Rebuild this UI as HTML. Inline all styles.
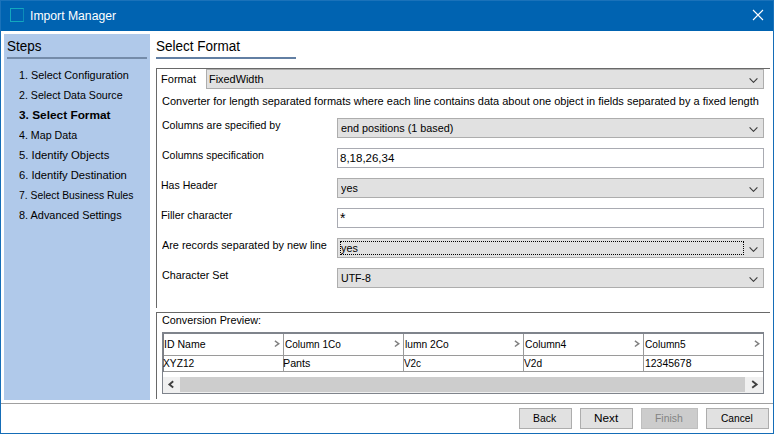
<!DOCTYPE html>
<html>
<head>
<meta charset="utf-8">
<title>Import Manager</title>
<style>
html,body{margin:0;padding:0;background:#fff;}
body{width:774px;height:434px;overflow:hidden;position:relative;font-family:"Liberation Sans",sans-serif;font-size:11.5px;color:#000;}
.abs{position:absolute;}
.t,.step,.h,.combo span,.field span,.btn span,#title{transform-origin:0 0;}
#win{position:absolute;left:0;top:0;width:772px;height:432px;border:1px solid #156DB7;background:#fff;}
#titlebar{position:absolute;left:0;top:0;width:772px;height:30px;background:#0063B1;border:1px solid #1A72BA;border-bottom:0;}
#ticon{position:absolute;left:9px;top:7px;width:12px;height:12px;border:1px solid #12A8BE;border-right-color:#0D8CB9;}
#title{position:absolute;left:29px;top:8px;font-size:12px;line-height:15px;color:#fff;white-space:nowrap;}
#close{position:absolute;left:751px;top:8px;width:12px;height:12px;}
#side{position:absolute;left:4px;top:34px;width:146px;height:366px;background:#B0C9EA;}
.h{position:absolute;font-size:14px;line-height:16px;white-space:nowrap;}
.ul{position:absolute;height:2px;background:#748BA9;}
.step{position:absolute;left:19px;white-space:nowrap;line-height:13px;}
.t{position:absolute;white-space:nowrap;line-height:13px;}
.panel{position:absolute;border-top:1px solid #696969;border-left:1px solid #696969;}
.combo{position:absolute;box-sizing:border-box;height:20px;background:#E1E1E1;border:1px solid #ADADAD;}
.combo span{position:absolute;left:3px;top:3px;line-height:13px;white-space:nowrap;}
.combo svg{position:absolute;right:5px;top:8px;}
.field{position:absolute;box-sizing:border-box;height:20px;background:#fff;border:1px solid #A9ABB2;}
.field span{position:absolute;left:2px;top:3px;line-height:13px;white-space:nowrap;}
.btn{position:absolute;top:408px;height:21px;box-sizing:border-box;background:#E1E1E1;border:1px solid #ADADAD;}
.btn span{position:absolute;top:3px;line-height:13px;white-space:nowrap;}
.btn.dis{background:#CCCCCC;border-color:#BFBFBF;color:#838383;}
.gl{position:absolute;background:#9A9A9A;}
.hm{color:#8A8A8A;}
#title{margin-left:0.00px;transform:scaleX(1.0159);}
#steps_h{margin-left:0.00px;transform:scaleX(0.9613);}
#s1{margin-left:0.00px;transform:scaleX(0.9443);}
#s2{margin-left:0.00px;transform:scaleX(0.9257);}
#s3{margin-left:0.00px;transform:scaleX(1.0306);}
#s4{margin-left:0.00px;transform:scaleX(0.9285);}
#s5{margin-left:0.00px;transform:scaleX(0.9815);}
#s6{margin-left:0.00px;transform:scaleX(0.9753);}
#s7{margin-left:0.00px;transform:scaleX(0.9001);}
#s8{margin-left:0.00px;transform:scaleX(0.9501);}
#main_h{margin-left:0.00px;transform:scaleX(0.9652);}
#l_format{margin-left:0.00px;transform:scaleX(0.9622);}
#c_format{margin-left:0.00px;transform:scaleX(0.9471);}
#l_desc{margin-left:0.00px;transform:scaleX(0.9556);}
#l_cols{margin-left:0.00px;transform:scaleX(0.9179);}
#l_spec{margin-left:0.00px;transform:scaleX(0.9104);}
#l_hdr{margin-left:0.00px;transform:scaleX(0.9147);}
#l_fill{margin-left:0.00px;transform:scaleX(0.9367);}
#l_rec{margin-left:0.00px;transform:scaleX(0.9445);}
#l_cs{margin-left:0.00px;transform:scaleX(0.9353);}
#l_prev{margin-left:0.00px;transform:scaleX(0.9391);}
#c_end{margin-left:0.00px;transform:scaleX(0.9390);}
#f_spec{margin-left:0.00px;transform:scaleX(0.9998);}
#c_yes1{margin-left:0.00px;transform:scaleX(0.9367);}
#c_yes2{margin-left:0.00px;transform:scaleX(0.9367);}
#c_utf{margin-left:0.00px;transform:scaleX(0.9204);}
#th1{margin-left:0.00px;transform:scaleX(0.9162);}
#th2{margin-left:0.00px;transform:scaleX(0.8744);}
#th3{margin-left:0.00px;transform:scaleX(0.8891);}
#th4{margin-left:0.00px;transform:scaleX(0.8985);}
#th5{margin-left:0.00px;transform:scaleX(0.8835);}
#td1{margin-left:0.00px;transform:scaleX(0.8894);}
#td2{margin-left:0.00px;transform:scaleX(0.9320);}
#td3{margin-left:0.00px;transform:scaleX(0.8604);}
#td4{margin-left:0.00px;transform:scaleX(0.8820);}
#td5{margin-left:0.00px;transform:scaleX(0.9081);}
#b_back{margin-left:0.00px;transform:scaleX(0.9041);}
#b_next{margin-left:0.00px;transform:scaleX(1.0216);}
#b_finish{margin-left:0.00px;transform:scaleX(0.9070);}
#b_cancel{margin-left:0.00px;transform:scaleX(0.8877);}
</style>
</head>
<body>
<div id="win"></div>
<div id="titlebar">
  <div id="ticon"></div>
  <div id="title">Import Manager</div>
  <svg id="close" viewBox="0 0 12 12"><path d="M1 1 L11 11 M11 1 L1 11" stroke="#fff" stroke-width="1.1" fill="none"/></svg>
</div>

<div id="side"></div>
<div class="h" id="steps_h" style="left:7px;top:38px;">Steps</div>
<div class="ul" style="left:7px;top:57px;width:140px;"></div>
<div class="step" id="s1" style="top:69px;">1. Select Configuration</div>
<div class="step" id="s2" style="top:89px;">2. Select Data Source</div>
<div class="step" id="s3" style="top:109px;font-weight:bold;">3. Select Format</div>
<div class="step" id="s4" style="top:129px;">4. Map Data</div>
<div class="step" id="s5" style="top:149px;">5. Identify Objects</div>
<div class="step" id="s6" style="top:169px;">6. Identify Destination</div>
<div class="step" id="s7" style="top:189px;">7. Select Business Rules</div>
<div class="step" id="s8" style="top:209px;">8. Advanced Settings</div>

<div class="h" id="main_h" style="left:156px;top:38px;">Select Format</div>
<div class="ul" style="left:156px;top:57px;width:140px;background:#627FA3;"></div>

<div class="panel" style="left:156px;top:68px;width:613px;height:239px;"></div>
<div class="t" id="l_format" style="left:161px;top:73px;">Format</div>
<div class="combo" style="left:206px;top:69px;width:558px;"><span id="c_format" style="left:2px;">FixedWidth</span><svg width="9" height="5" viewBox="0 0 9 5"><path d="M0.6 0.4 L4.5 4.3 L8.4 0.4" stroke="#3A3A3A" stroke-width="1.15" fill="none"/></svg></div>
<div class="t" id="l_desc" style="left:162px;top:95px;">Converter for length separated formats where each line contains data about one object in fields separated by a fixed length</div>

<div class="t" id="l_cols" style="left:162px;top:119px;">Columns are specified by</div>
<div class="combo" style="left:337px;top:118px;width:427px;"><span id="c_end">end positions (1 based)</span><svg width="9" height="5" viewBox="0 0 9 5"><path d="M0.6 0.4 L4.5 4.3 L8.4 0.4" stroke="#3A3A3A" stroke-width="1.15" fill="none"/></svg></div>

<div class="t" id="l_spec" style="left:162px;top:149px;">Columns specification</div>
<div class="field" style="left:337px;top:148px;width:427px;"><span id="f_spec">8,18,26,34</span></div>

<div class="t" id="l_hdr" style="left:161px;top:179px;">Has Header</div>
<div class="combo" style="left:337px;top:178px;width:427px;"><span id="c_yes1">yes</span><svg width="9" height="5" viewBox="0 0 9 5"><path d="M0.6 0.4 L4.5 4.3 L8.4 0.4" stroke="#3A3A3A" stroke-width="1.15" fill="none"/></svg></div>

<div class="t" id="l_fill" style="left:161px;top:209px;">Filler character</div>
<div class="field" style="left:337px;top:208px;width:427px;"><span id="f_star" style="font-size:14px;left:2px;top:3px;">*</span></div>

<div class="t" id="l_rec" style="left:162px;top:239px;">Are records separated by new line</div>
<div class="combo" style="left:337px;top:238px;width:427px;"><span id="c_yes2">yes</span><div class="abs" style="left:2px;top:2px;width:402px;height:12px;border:1px dotted #000;"></div><svg width="9" height="5" viewBox="0 0 9 5"><path d="M0.6 0.4 L4.5 4.3 L8.4 0.4" stroke="#3A3A3A" stroke-width="1.15" fill="none"/></svg></div>

<div class="t" id="l_cs" style="left:162px;top:269px;">Character Set</div>
<div class="combo" style="left:337px;top:268px;width:427px;"><span id="c_utf">UTF-8</span><svg width="9" height="5" viewBox="0 0 9 5"><path d="M0.6 0.4 L4.5 4.3 L8.4 0.4" stroke="#3A3A3A" stroke-width="1.15" fill="none"/></svg></div>

<div class="panel" style="left:156px;top:312px;width:613px;height:86px;"></div>
<div class="t" id="l_prev" style="left:162px;top:314px;">Conversion Preview:</div>

<div id="tbl" class="abs" style="left:162px;top:332px;width:602px;height:62px;box-sizing:border-box;border:1px solid #7F848C;border-top-width:2px;"></div>
<div class="abs" style="left:163px;top:334px;width:1px;height:38px;background:#7B7E84;"></div>
<div class="gl" style="left:164px;top:355px;width:599px;height:1px;"></div>
<div class="gl" style="left:164px;top:371px;width:599px;height:1px;"></div>
<div class="gl" style="left:283px;top:334px;width:1px;height:37px;"></div>
<div class="gl" style="left:403px;top:334px;width:1px;height:37px;"></div>
<div class="gl" style="left:523px;top:334px;width:1px;height:37px;"></div>
<div class="gl" style="left:643px;top:334px;width:1px;height:37px;"></div>

<div class="t" id="th1" style="left:164px;top:338px;">ID Name</div>
<div class="t" id="th2" style="left:285px;top:338px;">Column 1Co</div>
<div class="t" id="th3" style="left:405px;top:338px;">lumn 2Co</div>
<div class="t" id="th4" style="left:525px;top:338px;">Column4</div>
<div class="t" id="th5" style="left:645px;top:338px;">Column5</div>
<div class="t" id="td1" style="left:163px;top:357px;">XYZ12</div>
<div class="t" id="td2" style="left:283px;top:357px;">Pants</div>
<div class="t" id="td3" style="left:404px;top:357px;">V2c</div>
<div class="t" id="td4" style="left:524px;top:357px;">V2d</div>
<div class="t" id="td5" style="left:645px;top:357px;">12345678</div>

<svg class="abs" style="left:273.5px;top:340px;" width="6" height="8" viewBox="0 0 6 8"><path d="M0.9 0.9 L4.8 3.7 L0.9 6.5" stroke="#808080" stroke-width="1.5" fill="none"/></svg>
<svg class="abs" style="left:393.5px;top:340px;" width="6" height="8" viewBox="0 0 6 8"><path d="M0.9 0.9 L4.8 3.7 L0.9 6.5" stroke="#808080" stroke-width="1.5" fill="none"/></svg>
<svg class="abs" style="left:513.5px;top:340px;" width="6" height="8" viewBox="0 0 6 8"><path d="M0.9 0.9 L4.8 3.7 L0.9 6.5" stroke="#808080" stroke-width="1.5" fill="none"/></svg>
<svg class="abs" style="left:633.5px;top:340px;" width="6" height="8" viewBox="0 0 6 8"><path d="M0.9 0.9 L4.8 3.7 L0.9 6.5" stroke="#808080" stroke-width="1.5" fill="none"/></svg>
<svg class="abs" style="left:753.5px;top:340px;" width="6" height="8" viewBox="0 0 6 8"><path d="M0.9 0.9 L4.8 3.7 L0.9 6.5" stroke="#808080" stroke-width="1.5" fill="none"/></svg>

<div class="abs" style="left:163px;top:377px;width:600px;height:16px;background:#F0F0F0;"></div>
<div class="abs" style="left:180px;top:377px;width:565px;height:15px;background:#CDCDCD;"></div>
<svg class="abs" style="left:167px;top:380px;" width="8" height="9" viewBox="0 0 8 9"><path d="M6.2 1.3 L2.4 4.4 L6.2 7.5" stroke="#404040" stroke-width="1.9" fill="none"/></svg>
<svg class="abs" style="left:751px;top:380px;" width="8" height="9" viewBox="0 0 8 9"><path d="M1.2 1.1 L5.6 4.4 L1.2 7.7" stroke="#404040" stroke-width="1.9" fill="none"/></svg>

<div class="abs" style="left:1px;top:403px;width:772px;height:1px;background:#A0A0A0;"></div>
<div class="btn" style="left:519px;width:53px;"><span id="b_back" style="left:13px;">Back</span></div>
<div class="btn" style="left:580px;width:53px;"><span id="b_next" style="left:13px;">Next</span></div>
<div class="btn dis" style="left:641px;width:57px;"><span id="b_finish" style="left:13px;">Finish</span></div>
<div class="btn" style="left:706px;width:63px;"><span id="b_cancel" style="left:14px;">Cancel</span></div>
</body>
</html>
